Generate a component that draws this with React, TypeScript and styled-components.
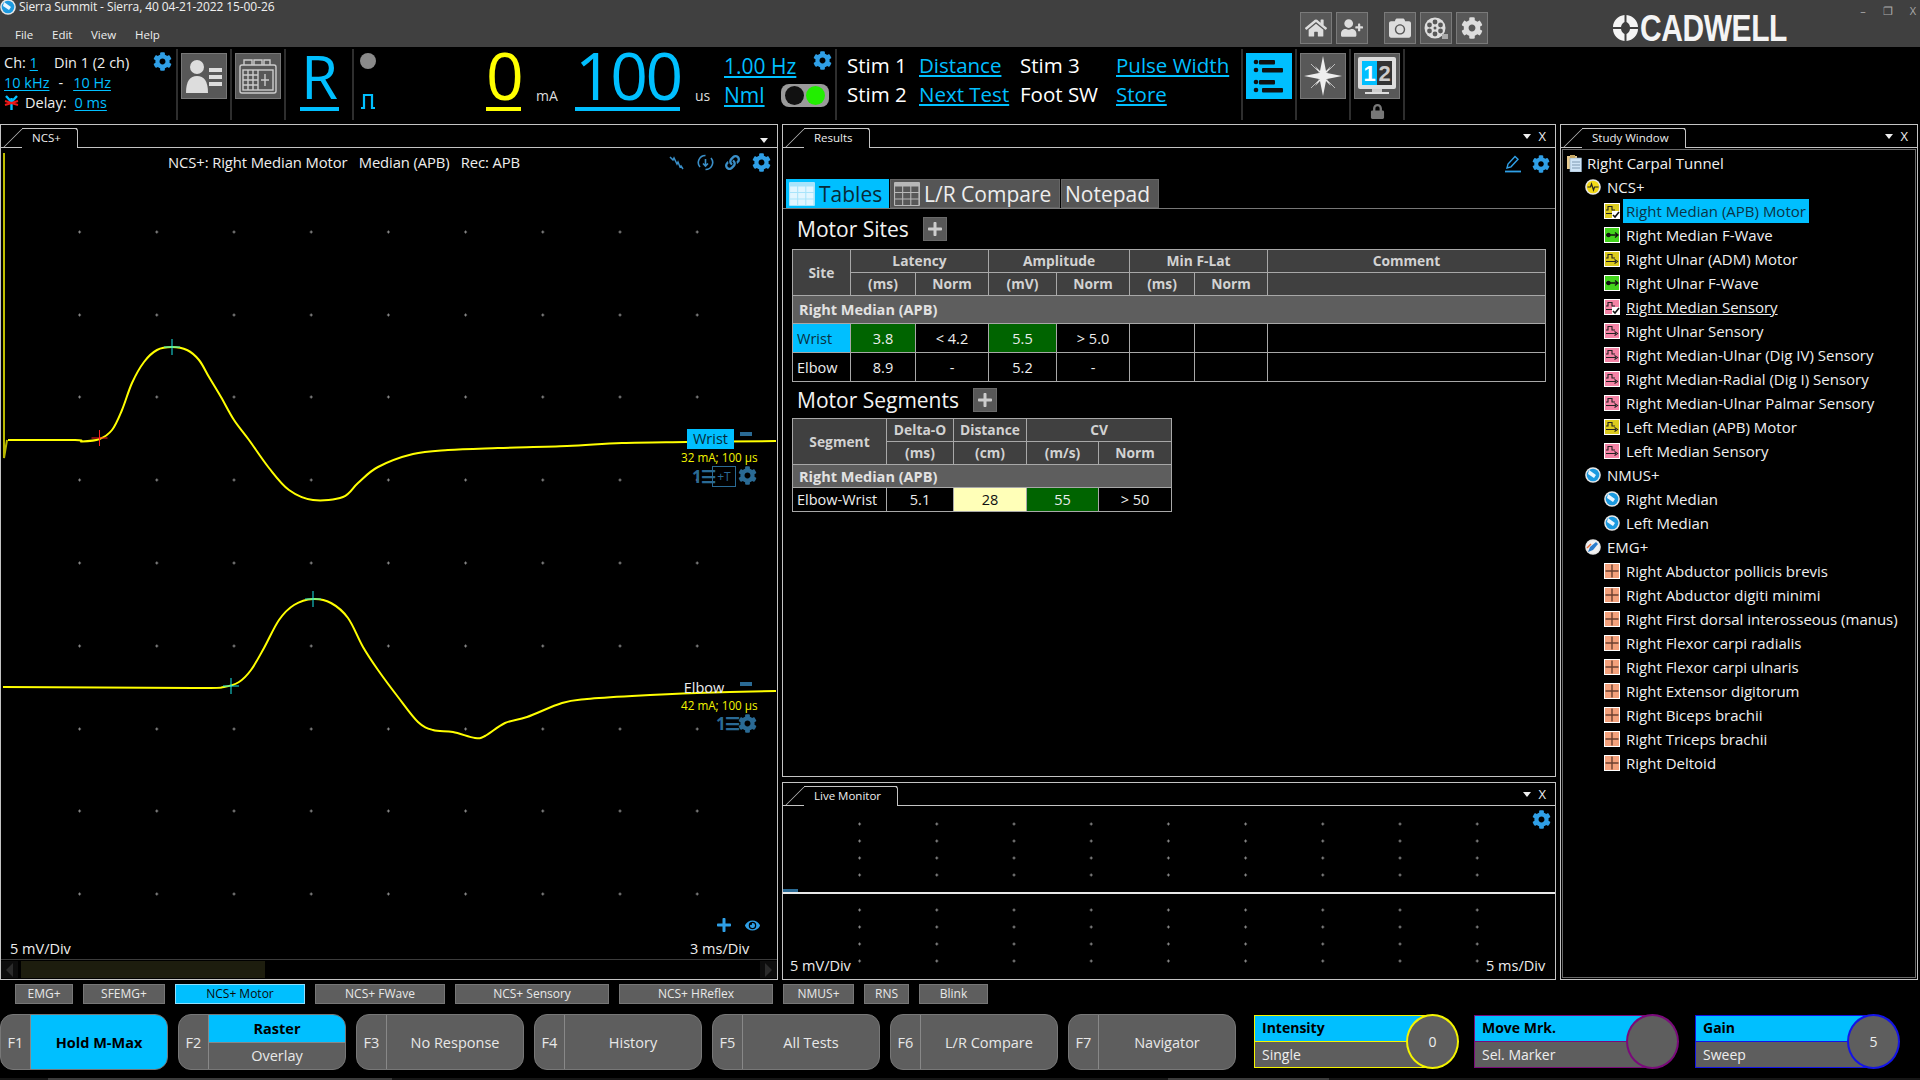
import React from "react";
import styled, { createGlobalStyle } from "styled-components";
import { FaCog, FaHome, FaUserPlus, FaCamera, FaLock, FaLink, FaPlus, FaEye } from "react-icons/fa";

const CYAN = "#00bfff";
const GEAR = "#2f9fe6";
const DIM = "#2a6a94";
const F = `"Open Sans", "Noto Sans", sans-serif`;

const Global = createGlobalStyle`
  html, body { margin: 0; padding: 0; background: #000; width: 1920px; height: 1080px; overflow: hidden; }
  body { font-family: ${F}; color: #fff; }
  * { box-sizing: border-box; }
`;

const Page = styled.div`width:1920px;height:1080px;display:flex;flex-direction:column;background:#000;`;

/* ---------- header ---------- */
const Header = styled.header`height:47px;background:#404040;display:flex;flex:none;`;
const TitleCol = styled.div`width:1300px;display:flex;flex-direction:column;`;
const TitleRow = styled.div`height:13px;display:flex;align-items:center;gap:3px;font-size:12px;letter-spacing:-.1px;color:#f0f0f0;`;
const MenuRow = styled.nav`display:flex;margin-top:14px;padding-left:15px;font-size:11.5px;color:#eee;`;
const MenuItem = styled.span<{ $w: number }>`width:${p => p.$w}px;`;
const HeadIcons = styled.div`display:flex;padding-top:12px;width:312px;`;
const HeadBtn = styled.div<{ $gap?: number }>`width:32px;height:32px;margin-right:${p => p.$gap ?? 4}px;background:#585858;border:1px solid #7a7a7a;display:flex;align-items:center;justify-content:center;color:#ddd;font-size:22px;`;
const Logo = styled.div`width:178px;height:47px;padding-top:14px;display:flex;align-items:flex-start;gap:1px;flex:none;`;
const LogoText = styled.span`font-family:"Liberation Sans",sans-serif;font-weight:700;font-size:37px;line-height:30px;color:#f4f4f4;transform:scaleX(.81);transform-origin:left top;letter-spacing:-.5px;white-space:nowrap;flex:none;`;
const WinCtl = styled.div`flex:1;display:flex;justify-content:flex-end;gap:17px;padding:3px 4px 0 0;font-size:11px;color:#aaa;`;

/* ---------- toolbar ---------- */
const Toolbar = styled.div`height:77px;display:flex;flex:none;padding-top:2px;`;
const Section = styled.div<{ $w: number }>`width:${p => p.$w}px;height:71px;border-right:2px solid #2e2e2e;flex:none;display:flex;position:relative;`;
const ChannelInfo = styled.div`width:100%;padding:5px 0 0 4px;display:flex;flex-direction:column;gap:3px;font-size:14.5px;line-height:17px;color:#eee;`;
const InfoRow = styled.div`display:flex;align-items:center;white-space:nowrap;`;
const Link = styled.span<{ $ml?: number }>`color:${CYAN};text-decoration:underline;text-underline-offset:2px;margin-left:${p => p.$ml ?? 0}px;`;
const Spaced = styled.span<{ $ml: number }>`margin-left:${p => p.$ml}px;`;
const GearAt = styled.span<{ $x: number; $y: number; $size?: number; $c?: string }>`position:absolute;left:${p => p.$x}px;top:${p => p.$y}px;font-size:${p => p.$size ?? 19}px;color:${p => p.$c ?? GEAR};line-height:0;`;
const SquareBtn = styled.div<{ $active?: boolean }>`width:46px;height:46px;margin:4px 0 0 3px;background:${p => (p.$active ? CYAN : "#585858")};border:1px solid ${p => (p.$active ? CYAN : "#777")};display:flex;align-items:center;justify-content:center;flex:none;`;
const SideCol = styled.div`display:flex;flex-direction:column;align-items:center;`;
const LockWrap = styled.div`color:#777;font-size:15px;margin:5px 0 0 3px;line-height:0;`;
const SideBig = styled.div`margin:0 0 0 14px;width:39px;display:flex;flex-direction:column;align-items:center;`;
const BigValue = styled.div<{ $c: string; $w: number; $fs: number; $lh: number; $ml?: number; $ls?: number }>`width:${p => p.$w}px;height:62px;margin-left:${p => p.$ml ?? 0}px;text-align:center;color:${p => p.$c};font-size:${p => p.$fs}px;line-height:${p => p.$lh}px;border-bottom:4px solid ${p => p.$c};letter-spacing:${p => p.$ls ?? 0}px;flex:none;white-space:nowrap;`;
const Lamp = styled.div`width:16px;height:16px;border-radius:50%;background:#8a8a8a;margin:4px 0 24px 6px;flex:none;`;
const PulseWrap = styled.span`margin-left:6px;line-height:0;`;
const LedCol = styled.div`width:22px;display:flex;flex-direction:column;flex:none;`;
const Unit = styled.span<{ $ml: number; $w: number }>`width:${p => p.$w}px;margin-left:${p => p.$ml}px;align-self:flex-start;margin-top:38px;font-size:14px;line-height:18px;color:#ddd;flex:none;`;
const RateCol = styled.div`margin-left:12px;display:flex;flex-direction:column;gap:3px;font-size:21px;line-height:26px;padding-top:4px;flex:none;`;
const ToggleBox = styled.div`width:48px;height:23px;background:#9a9a9a;border-radius:8px;display:flex;align-items:center;justify-content:space-around;padding:0 3px;position:absolute;left:427px;top:35px;`;
const ToggleDot = styled.span<{ $c: string }>`width:19px;height:19px;border-radius:50%;background:${p => p.$c};`;
const StimGrid = styled.div`display:grid;grid-template-columns:72px 101px 96px auto;grid-auto-rows:29px;padding:2px 0 0 10px;font-size:20.5px;line-height:29px;white-space:nowrap;color:#fff;align-content:start;width:100%;`;

/* ---------- panels ---------- */
const Main = styled.main`height:856px;display:grid;grid-template-columns:778px 774px 358px;column-gap:4px;flex:none;`;
const Panel = styled.section<{ $h?: number }>`border:1px solid #c4c4c4;display:flex;flex-direction:column;min-height:0;${p => (p.$h ? `height:${p.$h}px;flex:none;` : "flex:1;")}position:relative;`;
const MidCol = styled.div`display:flex;flex-direction:column;gap:5px;min-height:0;`;
const Strip = styled.div`height:23px;border-bottom:1px solid #c4c4c4;display:flex;align-items:flex-end;justify-content:space-between;padding-left:21px;flex:none;`;
const Tab = styled.div`height:20px;border:1px solid #c4c4c4;border-bottom:none;border-left:none;border-radius:0 3px 0 0;padding:0 16px 0 10px;font-size:11.5px;line-height:17px;color:#eee;position:relative;white-space:nowrap;background:#000;margin-bottom:-1px;
  &::before{content:"";position:absolute;left:-10px;top:0;bottom:0;width:20px;border-left:1px solid #c4c4c4;transform:skewX(-45deg);}
  &::after{content:"";position:absolute;left:0;right:0;top:-1px;border-top:1px solid #c4c4c4;}
`;
const StripCtl = styled.div`display:flex;align-items:center;gap:7px;padding:0 9px 4px 0;font-size:13px;line-height:14px;color:#eee;`;
const Tri = styled.span`width:0;height:0;border-left:4px solid transparent;border-right:4px solid transparent;border-top:5px solid #eee;`;
const Canvas = styled.div`flex:1;position:relative;min-height:0;`;
const CanvasSvg = styled.svg`position:absolute;left:0;top:0;display:block;`;
const CanvasTitle = styled.div`position:absolute;left:167px;top:5px;font-size:14.8px;line-height:18px;color:#eee;white-space:pre;letter-spacing:-.1px;`;
const Float = styled.div<{ $x: number; $y: number; $c?: string; $fs?: number }>`position:absolute;left:${p => p.$x}px;top:${p => p.$y}px;color:${p => p.$c ?? "#eee"};font-size:${p => p.$fs ?? 14.5}px;line-height:18px;white-space:nowrap;display:flex;align-items:center;`;
const TraceLabel = styled.span<{ $on?: boolean }>`width:${p => (p.$on ? 47 : 42)}px;height:20px;background:${p => (p.$on ? CYAN : "transparent")};color:${p => (p.$on ? "#062b3a" : "#eee")};font-size:14.5px;line-height:20px;text-align:center;`;
const Minus = styled.span`width:12px;height:4px;background:${DIM};`;
const PlusT = styled.span`width:24px;height:21px;border:1px solid ${DIM};color:${DIM};font-size:12px;line-height:19px;text-align:center;`;
const NumList = styled.span`color:${DIM};font-size:17px;font-weight:700;line-height:20px;letter-spacing:-1px;width:20px;`;
const ScrollBar = styled.div`height:20px;flex:none;border-top:1px solid #3c3c3c;display:flex;align-items:stretch;padding:1px 0;background:#000;`;
const ScrollArrow = styled.div<{ $dir: "l" | "r" }>`width:17px;display:flex;align-items:center;justify-content:center;background:#0d0d0d;
  &::before{content:"";border-top:7px solid transparent;border-bottom:7px solid transparent;${p => (p.$dir === "l" ? "border-right:7px solid #2b2b2b;" : "border-left:7px solid #2b2b2b;")}}`;
const ScrollTrack = styled.div`flex:1;padding-left:3px;`;
const ScrollThumb = styled.div`width:244px;height:100%;background:#1d1d0e;`;

/* ---------- results ---------- */
const ToolLine = styled.div`height:30px;display:flex;justify-content:flex-end;align-items:center;gap:10px;padding:2px 5px 0 0;color:${GEAR};font-size:18px;flex:none;`;
const TabBar = styled.div`height:30px;display:flex;border-bottom:1px solid #777;padding-left:3px;flex:none;margin-top:1px;`;
const SubTab = styled.div<{ $on?: boolean; $w: number }>`width:${p => p.$w}px;height:29px;background:${p => (p.$on ? CYAN : "#555")};color:${p => (p.$on ? "#082a38" : "#eee")};font-size:21px;line-height:28px;display:flex;align-items:center;gap:4px;padding-left:3px;margin-right:1px;border:${p => (p.$on ? "none" : "1px solid #666")};white-space:nowrap;`;
const GridIcon = styled.svg`flex:none;`;
const Heading = styled.div<{ $h: number }>`height:${p => p.$h}px;display:flex;align-items:center;gap:14px;padding-left:14px;font-size:21px;color:#f2f2f2;flex:none;`;
const AddBtn = styled.div`width:24px;height:24px;background:#585858;border:1px solid #6a6a6a;display:flex;align-items:center;justify-content:center;color:#ccc;font-size:16px;`;
const TableWrap = styled.div`padding-left:9px;flex:none;`;
const Table = styled.table<{ $w: number }>`width:${p => p.$w}px;border-collapse:collapse;table-layout:fixed;font-size:14.5px;`;
const Th = styled.th<{ $h: number }>`height:${p => p.$h}px;background:#404040;border:1px solid #a8a8a8;color:#d2d2d2;font-weight:700;padding:0;font-size:13.8px;line-height:16px;`;
const Sec = styled.td<{ $h: number }>`height:${p => p.$h}px;background:#5e5e5e;border:1px solid #a8a8a8;color:#e2e2e2;font-weight:700;padding:0 0 0 6px;`;
const Td = styled.td<{ $h: number; $bg?: string; $c?: string; $left?: boolean }>`height:${p => p.$h}px;background:${p => p.$bg ?? "#000"};color:${p => p.$c ?? "#eee"};border:1px solid #a8a8a8;padding:${p => (p.$left ? "0 0 0 4px" : "0")};text-align:${p => (p.$left ? "left" : "center")};`;

/* ---------- study ---------- */
const TreeBox = styled.div`flex:1;margin:1px;border:1px solid #6a6a6a;padding-top:1px;min-height:0;`;
const TreeRow = styled.div<{ $lvl: number }>`height:24px;display:flex;align-items:center;padding-left:${p => [4, 22, 41][p.$lvl]}px;gap:${p => (p.$lvl === 0 ? 5 : 6)}px;font-size:15px;color:#f0f0f0;white-space:nowrap;`;
const TreeText = styled.span<{ $sel?: boolean; $u?: boolean }>`height:24px;line-height:24px;padding:0 3px 0 ${p => (p.$sel ? 3 : 0)}px;margin-left:${p => (p.$sel ? -3 : 0)}px;background:${p => (p.$sel ? CYAN : "transparent")};color:${p => (p.$sel ? "#0b3346" : "#f0f0f0")};text-decoration:${p => (p.$u ? "underline" : "none")};`;

/* ---------- bottom ---------- */
const ChipRow = styled.div`height:34px;flex:none;display:flex;padding:4px 0 0 15px;gap:10px;`;
const Chip = styled.div<{ $w: number; $on?: boolean }>`width:${p => p.$w}px;height:20px;background:${p => (p.$on ? CYAN : "#5e5e5e")};color:${p => (p.$on ? "#0a0a0a" : "#e8e8e8")};border:1px solid ${p => (p.$on ? "#8fdfff" : "#777")};font-size:12px;line-height:18px;text-align:center;white-space:nowrap;`;
const KeyRow = styled.div`height:56px;flex:none;display:flex;gap:10px;`;
const FBtn = styled.div`width:168px;height:56px;border-radius:13px;overflow:hidden;background:#5e5e5e;border:1px solid #777;display:flex;flex:none;`;
const FLabel = styled.div`width:30px;border-right:1px solid #888;display:flex;align-items:center;justify-content:center;font-size:14.5px;color:#e8e8e8;flex:none;`;
const FStack = styled.div`flex:1;display:flex;flex-direction:column;`;
const FPart = styled.div<{ $on?: boolean }>`flex:1;display:flex;align-items:center;justify-content:center;font-size:14.5px;background:${p => (p.$on ? CYAN : "transparent")};color:${p => (p.$on ? "#000" : "#e8e8e8")};font-weight:${p => (p.$on ? 700 : 400)};& + &{border-top:1px solid #888;}`;
const Knob = styled.div<{ $ml: number }>`width:205px;height:53px;margin:1px 0 0 ${p => p.$ml}px;position:relative;display:flex;flex:none;`;
const KnobBody = styled.div<{ $c: string }>`flex:1;margin-right:26px;border:1px solid ${p => p.$c};border-right:none;display:flex;flex-direction:column;background:#5e5e5e;`;
const KnobTop = styled.div<{ $c: string }>`height:26px;background:${CYAN};border-bottom:1px solid ${p => p.$c};padding:0 7px;font-size:14px;font-weight:700;line-height:24px;color:#000;flex:none;`;
const KnobBottom = styled.div`flex:1;padding:0 7px;font-size:14px;line-height:25px;color:#eee;`;
const KnobDial = styled.div<{ $c: string }>`position:absolute;right:0;top:-1px;width:53px;height:55px;border-radius:50%;border:2px solid ${p => p.$c};background:#5e5e5e;display:flex;align-items:center;justify-content:center;font-size:14px;color:#eee;`;
const BottomStrip = styled.div`flex:1;margin-top:8px;display:flex;background:#161616;`;
const StripSeg = styled.div<{ $ml: number; $w: number }>`margin-left:${p => p.$ml}px;width:${p => p.$w}px;background:#3c3c3c;`;

/* ---------- drawings ---------- */
const spline = (pts: number[][]) => {
  let d = `M${pts[0][0]} ${pts[0][1]}`;
  for (let i = 0; i < pts.length - 1; i++) {
    const a = pts[Math.max(i - 1, 0)], b = pts[i], c = pts[i + 1], e = pts[Math.min(i + 2, pts.length - 1)];
    d += ` C${b[0] + (c[0] - a[0]) / 6} ${b[1] + (c[1] - a[1]) / 6} ${c[0] - (e[0] - b[0]) / 6} ${c[1] - (e[1] - b[1]) / 6} ${c[0]} ${c[1]}`;
  }
  return d;
};
const W1 = [[8,440],[75,440],[82,441.5],[99.5,439],[112,430],[122,410],[132,383],[144,362],[157,350],[172,347],[187,350],[199,360],[209,377],[221,397],[234,420],[249,440],[269,468],[289,490],[313,500],[343,497],[358,483],[378,467],[413,454],[448,450],[498,448],[567,446],[622,443],[687,442],[776,441]];
const W2 = [[3,687],[194,688],[224,687],[239,682],[251,670],[264,648],[279,620],[294,605],[313,599],[331,603],[348,618],[363,647],[378,670],[398,697],[418,722],[433,730],[453,732],[475,738],[485,736],[505,723],[527,717],[562,703],[587,699],[632,696],[697,693],[776,691]];
const DX = [79.6, 156.8, 234, 311.2, 388.4, 465.6, 542.8, 620, 697.2];
const Dots = ({ xs, ys }: { xs: number[]; ys: number[] }) => (
  <g stroke="#8c8c8c" strokeWidth="1">
    {xs.map(x => ys.map(y => <path key={`${x}-${y}`} d={`M${x - 1.5} ${y}h3M${x} ${y - 1.5}v3`} />))}
  </g>
);
const Cross = ({ x, y, c, v = 8, h = 8 }: { x: number; y: number; c: string; v?: number; h?: number }) => (
  <path d={`M${x} ${y - v}v${v * 2}M${x - h} ${y}h${h * 2}`} stroke={c} strokeWidth="1" fill="none" />
);

const UserCard = () => (
  <svg width="38" height="38" viewBox="0 0 38 38" fill="#ddd">
    <circle cx="12" cy="10" r="7" /><path d="M1 36c0-12 4-17 11-17s11 5 11 17z" />
    <rect x="24" y="11" width="13" height="4" /><rect x="24" y="18" width="13" height="4" /><rect x="24" y="25" width="13" height="4" />
  </svg>
);
const Planner = () => (
  <svg width="40" height="40" viewBox="0 0 40 40" fill="none" stroke="#ccc" strokeWidth="1.4">
    <path d="M6 9V4h8v5M16 9V4h8v5M26 9V4h6v5" /><rect x="2" y="9" width="36" height="28" rx="2" />
    <rect x="5" y="14" width="30" height="20" /><path d="M5 19h15M5 24h15M5 29h15M10 14v20M15 14v20M20 14v20M27 18v12M23 24h8" />
  </svg>
);
const ListIcon = () => (
  <svg width="36" height="40" viewBox="0 0 36 40" fill="#111">
    {[4, 12, 24, 32].map((y, i) => (
      <g key={y}><circle cx="5" cy={y + 2} r="2.3" /><rect x={i % 2 ? 11 : 8} y={y} width={i % 2 ? 21 : 16} height="4.5" rx="1" /></g>
    ))}
  </svg>
);
const Polaris = () => (
  <svg width="42" height="42" viewBox="0 0 42 42">
    <path d="M21 1l3 15 5-5-4 7 15 3-15 3 4 7-5-5-3 15-3-15-5 5 4-7-15-3 15-3-4-7 5 5z" fill="#eee" />
    <path d="M9 9l9 9M33 9l-9 9M9 33l9-9M33 33l-9-9" stroke="#bbb" strokeWidth="1" />
  </svg>
);
const Monitor12 = () => (
  <svg width="40" height="42" viewBox="0 0 40 42">
    <rect x="1" y="2" width="38" height="32" rx="2" fill="#ddd" />
    <rect x="5" y="6" width="15" height="24" fill={CYAN} /><rect x="20" y="6" width="15" height="24" fill="#333" />
    <text x="12.5" y="26" textAnchor="middle" fontSize="22" fontWeight="700" fontFamily="Liberation Sans, sans-serif" fill="#fff">1</text>
    <text x="27.5" y="26" textAnchor="middle" fontSize="22" fontWeight="700" fontFamily="Liberation Sans, sans-serif" fill="#ccc">2</text>
    <rect x="15" y="34" width="10" height="3" fill="#ccc" /><rect x="8" y="37" width="24" height="2" fill="#ddd" />
  </svg>
);
const Reel = () => (
  <svg width="26" height="26" viewBox="0 0 26 26">
    <circle cx="12" cy="13" r="10.5" fill="#ddd" />
    {[[12, 7], [12, 19], [6.5, 10], [17.5, 10], [6.5, 16], [17.5, 16]].map(([x, y]) => <circle key={`${x}${y}`} cx={x} cy={y} r="2.4" fill="#585858" />)}
    <circle cx="12" cy="13" r="1.5" fill="#585858" /><rect x="19" y="19" width="6" height="5" fill="#aaa" />
  </svg>
);
const Pulse = () => (
  <svg width="16" height="16" viewBox="0 0 16 16" fill="none" stroke={CYAN} strokeWidth="2.2"><path d="M1 15h3V2h8v13h3" /></svg>
);
const Antenna = () => (
  <svg width="15" height="16" viewBox="0 0 15 16">
    <path d="M7.5 3v12" stroke={CYAN} strokeWidth="2.4" /><path d="M2 1l5.5 6L13 1" stroke={CYAN} strokeWidth="2.4" fill="none" /><path d="M1 6l13 4M14 6L1 10" stroke="#f01818" strokeWidth="2" />
  </svg>
);
const LogoMark = () => (
  <svg width="27" height="28" viewBox="0 0 27 28" fill="#f4f4f4" style={{ flex: "none" }}>
    <path d="M12.5 1C6 1.6 1 7 1 13h8c.5-3 2-4 3.5-5z" /><path d="M14.5 1c6.5.6 11.5 6 11.5 12h-8c-.5-3-2-4-3.5-5z" />
    <path d="M12.5 27C6 26.400 1 21 1 15h8c.5 3 2 4 3.500 5z" /><path d="M14.5 27c6.500-.6 11.500-6 11.500-12h-8c-.5 3-2 4-3.500 5z" />
  </svg>
);
const WaveScribble = () => (
  <svg width="16" height="16" viewBox="0 0 16 16" fill="none" stroke="#3a8fc8" strokeWidth="1.5"><path d="M1 2l3 3 1-2 3 6 1-2 2 5 1-1 2 3" /></svg>
);
const Cycle = () => (
  <svg width="17" height="17" viewBox="0 0 17 17" fill="none" stroke="#3a8fc8" strokeWidth="1.6"><path d="M3 13A7 7 0 0 1 8.500 1.500M14 4a7 7 0 0 1-5.500 11.500M8.500 5v7M6 9.500l2.500 2.500 2.500-2.500" /></svg>
);
const PenLine = () => (
  <svg width="18" height="18" viewBox="0 0 18 18" fill="none" stroke={GEAR} strokeWidth="1.4" style={{ display: "block" }}>
    <path d="M3 13l1-4 7-7.500 3 2.800-7 7.500z" /><path d="M1 16.500h16" strokeWidth="1.800" />
  </svg>
);
const TableGlyph = ({ on }: { on?: boolean }) => (
  <GridIcon width="26" height="24" viewBox="0 0 24 24" preserveAspectRatio="none">
    <rect width="24" height="24" rx="1" fill={on ? "#a8e4fb" : "#b8b8b8"} />
    {[1, 8.5, 16].map(x => [4.5, 11, 17.5].map(y => <rect key={`${x}${y}`} x={x} y={y} width="6.5" height="5.5" fill={on ? "#e2f6ff" : "#585858"} />))}
  </GridIcon>
);

type Kind = "motor" | "fwave" | "sens" | "emg";
const KIND: Record<Kind, string> = { motor: "#dccb1e", fwave: "#43d41c", sens: "#f483a5", emg: "#f4a17c" };
const IconSvg = styled.svg`flex:none;`;
const TestIcon = ({ kind, check }: { kind: Kind; check?: boolean }) => (
  <IconSvg width="16" height="16" viewBox="0 0 16 16">
    <rect width="16" height="16" fill="#fff" /><rect x="1" y="1" width="14" height="14" fill={KIND[kind]} />
    {kind === "fwave" && <path d="M2 8h11M11 5.5L14 8l-3 2.5" stroke="#111" strokeWidth="1.3" fill="none" />}
    {kind === "fwave" && <circle cx="4.5" cy="8" r="2.2" fill="#111" />}
    {(kind === "motor" || kind === "sens") && <path d="M2 7h2V3.500h4V7h3M2 10.500h10M10.500 8.500l3 2-3 2" stroke="#222" strokeWidth="1.100" fill="none" />}
    {kind === "emg" && <path d="M8 1.500v13M1.500 8h13" stroke="#6a4030" strokeWidth="1.400" />}
    {check && <rect x="8" y="8" width="8" height="8" fill="#fff" />}
    {check && <path d="M9 12l2 2 4-5" stroke="#111" strokeWidth="1.600" fill="none" />}
  </IconSvg>
);
const Orb = ({ kind }: { kind: "ncs" | "nmus" | "emg" }) => (
  <IconSvg width="16" height="16" viewBox="0 0 16 16">
    <circle cx="8" cy="8" r="7.800" fill="#e8e8e8" />
    <circle cx="8" cy="8" r="6.300" fill={kind === "ncs" ? "#f2d816" : kind === "nmus" ? "#1c9ae0" : "#f2f2f2"} />
    {kind === "ncs" && <path d="M2.500 8h3l1-3 2 6 1-3h4" stroke="#222" strokeWidth="1.200" fill="none" />}
    {kind === "nmus" && <path d="M4 3l7 5-2 3-6-4z" fill="#eaf6ff" />}
    {kind === "emg" && <path d="M3 13l2-5 6-5 2 2-5 6z" fill="#2a7ccc" />}
    {kind === "emg" && <path d="M2 9c2-2 3-3 4-4" stroke="#e8703a" strokeWidth="1.500" />}
  </IconSvg>
);
const Clip = () => (
  <IconSvg width="15" height="17" viewBox="0 0 15 17">
    <rect x="0" y="1" width="10" height="13" fill="#e6c98e" /><rect x="3" y="3" width="11.500" height="14" fill="#cfe4f6" stroke="#8aa6bd" strokeWidth=".6" />
    <path d="M5 7h8M5 10h8M5 13h8" stroke="#7f99b1" strokeWidth="1" />
    <rect x="3" y="0" width="5" height="3" fill="#c7a866" />
  </IconSvg>
);

const tests: { t: string; k: Kind; check?: boolean; sel?: boolean; u?: boolean }[] = [
  { t: "Right Median (APB) Motor", k: "motor", check: true, sel: true },
  { t: "Right Median F-Wave", k: "fwave" },
  { t: "Right Ulnar (ADM) Motor", k: "motor" },
  { t: "Right Ulnar F-Wave", k: "fwave" },
  { t: "Right Median Sensory", k: "sens", check: true, u: true },
  { t: "Right Ulnar Sensory", k: "sens" },
  { t: "Right Median-Ulnar (Dig IV) Sensory", k: "sens" },
  { t: "Right Median-Radial (Dig I) Sensory", k: "sens" },
  { t: "Right Median-Ulnar Palmar Sensory", k: "sens" },
  { t: "Left Median (APB) Motor", k: "motor" },
  { t: "Left Median Sensory", k: "sens" },
];
const emg = ["Right Abductor pollicis brevis", "Right Abductor digiti minimi", "Right First dorsal interosseous (manus)", "Right Flexor carpi radialis", "Right Flexor carpi ulnaris", "Right Extensor digitorum", "Right Biceps brachii", "Right Triceps brachii", "Right Deltoid"];
const chips: [string, number, boolean?][] = [["EMG+", 58], ["SFEMG+", 82], ["NCS+ Motor", 130, true], ["NCS+ FWave", 130], ["NCS+ Sensory", 154], ["NCS+ HReflex", 154], ["NMUS+", 71], ["RNS", 45], ["Blink", 69]];

const StripControls = ({ close = true }: { close?: boolean }) => (
  <StripCtl><Tri />{close && <span>X</span>}</StripCtl>
);

export default function App() {
  return (
    <Page>
      <Global />
      <Header>
        <TitleCol>
          <TitleRow>
            <Orb kind="nmus" />
            <span>Sierra Summit - Sierra, 40 04-21-2022 15-00-26</span>
          </TitleRow>
          <MenuRow>
            <MenuItem $w={37}>File</MenuItem><MenuItem $w={39}>Edit</MenuItem><MenuItem $w={44}>View</MenuItem><MenuItem $w={40}>Help</MenuItem>
          </MenuRow>
        </TitleCol>
        <HeadIcons>
          <HeadBtn><FaHome /></HeadBtn>
          <HeadBtn $gap={16}><FaUserPlus /></HeadBtn>
          <HeadBtn><FaCamera /></HeadBtn>
          <HeadBtn><Reel /></HeadBtn>
          <HeadBtn><FaCog /></HeadBtn>
        </HeadIcons>
        <Logo><LogoMark /><LogoText>CADWELL</LogoText></Logo>
        <WinCtl><span>–</span><span>❐</span><span>X</span></WinCtl>
      </Header>

      <Toolbar>
        <Section $w={178}>
          <ChannelInfo>
            <InfoRow>Ch:&nbsp;<Link>1</Link><Spaced $ml={16}>Din 1 (2 ch)</Spaced></InfoRow>
            <InfoRow><Link>10 kHz</Link><Spaced $ml={9}>-</Spaced><Link $ml={10}>10 Hz</Link></InfoRow>
            <InfoRow><Antenna /><Spaced $ml={6}>Delay:</Spaced><Link $ml={8}>0 ms</Link></InfoRow>
          </ChannelInfo>
          <GearAt $x={153} $y={3}><FaCog /></GearAt>
        </Section>
        <Section $w={54}><SquareBtn><UserCard /></SquareBtn></Section>
        <Section $w={54}><SquareBtn><Planner /></SquareBtn></Section>
        <Section $w={68}>
          <SideBig><BigValue $c={CYAN} $w={39} $fs={60} $lh={55}>R</BigValue></SideBig>
        </Section>
        <Section $w={483}>
          <LedCol><Lamp /><PulseWrap><Pulse /></PulseWrap></LedCol>
          <BigValue $c="#ffff00" $w={35} $fs={66} $lh={51} $ml={110}>0</BigValue>
          <Unit $ml={15} $w={26}>mA</Unit>
          <BigValue $c={CYAN} $w={105} $fs={66} $lh={51} $ml={13} $ls={-2.5}>100</BigValue>
          <Unit $ml={15} $w={17}>us</Unit>
          <RateCol><Link>1.00 Hz</Link><span><Link>Nml</Link></span></RateCol>
          <GearAt $x={459} $y={2}><FaCog /></GearAt>
          <ToggleBox><ToggleDot $c="#111" /><ToggleDot $c="#22ee00" /></ToggleBox>
        </Section>
        <Section $w={406}>
          <StimGrid>
            <span>Stim 1</span><Link>Distance</Link><span>Stim 3</span><Link>Pulse Width</Link>
            <span>Stim 2</span><Link>Next Test</Link><span>Foot SW</span><Link>Store</Link>
          </StimGrid>
        </Section>
        <Section $w={54}><SquareBtn $active><ListIcon /></SquareBtn></Section>
        <Section $w={54}><SquareBtn><Polaris /></SquareBtn></Section>
        <Section $w={54}>
          <SideCol><SquareBtn><Monitor12 /></SquareBtn><LockWrap><FaLock /></LockWrap></SideCol>
        </Section>
      </Toolbar>

      <Main>
        <Panel>
          <Strip><Tab>NCS+</Tab><StripControls close={false} /></Strip>
          <Canvas>
            <CanvasSvg width="776" height="811" viewBox="1 148 776 811">
              <Dots xs={DX} ys={[232, 315, 397, 480, 563, 646, 729, 811, 894]} />
              <path d="M4 153V400" stroke="#ffff00" strokeWidth="1.5" fill="none" />
              <path d="M4 400V458L7 440" stroke="#b8b800" strokeWidth="2" fill="none" />
              <path d={spline(W1)} stroke="#ffff00" strokeWidth="2" fill="none" />
              <path d={spline(W2)} stroke="#ffff00" strokeWidth="2" fill="none" />
              <Cross x={99.5} y={438} c="#ff2020" />
              <Cross x={172} y={347} c="#19e6e6" />
              <Cross x={231} y={686} c="#19e6e6" />
              <Cross x={313} y={599} c="#19e6e6" />
            </CanvasSvg>
            <CanvasTitle>NCS+: Right Median Motor   Median (APB)   Rec: APB</CanvasTitle>
            <GearAt $x={668} $y={7}><WaveScribble /></GearAt>
            <GearAt $x={696} $y={6}><Cycle /></GearAt>
            <GearAt $x={724} $y={7} $size={15} $c="#3a8fc8"><FaLink /></GearAt>
            <GearAt $x={751} $y={5}><FaCog /></GearAt>
            <Float $x={686} $y={281}><TraceLabel $on>Wrist</TraceLabel></Float>
            <Float $x={739} $y={284}><Minus /></Float>
            <Float $x={680} $y={300} $c="#f4f400" $fs={11.7}>32 mA; 100 µs</Float>
            <Float $x={691} $y={318}><NumList>1☰</NumList><PlusT>+T</PlusT></Float>
            <GearAt $x={737} $y={318} $c={DIM}><FaCog /></GearAt>
            <Float $x={682} $y={530}><TraceLabel>Elbow</TraceLabel></Float>
            <Float $x={739} $y={534}><Minus /></Float>
            <Float $x={680} $y={548} $c="#f4f400" $fs={11.7}>42 mA; 100 µs</Float>
            <Float $x={715} $y={566}><NumList>1☰</NumList></Float>
            <GearAt $x={737} $y={566} $c={DIM}><FaCog /></GearAt>
            <GearAt $x={715} $y={769} $size={16} $c={GEAR}><FaPlus /></GearAt>
            <GearAt $x={744} $y={770} $size={15} $c={GEAR}><FaEye /></GearAt>
            <Float $x={9} $y={792}>5 mV/Div</Float>
            <Float $x={689} $y={792}>3 ms/Div</Float>
          </Canvas>
          <ScrollBar>
            <ScrollArrow $dir="l" /><ScrollTrack><ScrollThumb /></ScrollTrack><ScrollArrow $dir="r" />
          </ScrollBar>
        </Panel>

        <MidCol>
          <Panel $h={653}>
            <Strip><Tab>Results</Tab><StripControls /></Strip>
            <ToolLine><PenLine /><FaCog /></ToolLine>
            <TabBar>
              <SubTab $on $w={103}><TableGlyph on />Tables</SubTab>
              <SubTab $w={170}><TableGlyph />L/R Compare</SubTab>
              <SubTab $w={98}>Notepad</SubTab>
            </TabBar>
            <Heading $h={40}>Motor Sites<AddBtn><FaPlus /></AddBtn></Heading>
            <TableWrap>
              <Table $w={753}>
                <colgroup>
                  {[58, 65, 73, 68, 73, 65, 73, 278].map((w, i) => <col key={i} width={w} />)}
                </colgroup>
                <tbody>
                  <tr><Th $h={23} rowSpan={2}>Site</Th><Th $h={23} colSpan={2}>Latency</Th><Th $h={23} colSpan={2}>Amplitude</Th><Th $h={23} colSpan={2}>Min F-Lat</Th><Th $h={23}>Comment</Th></tr>
                  <tr><Th $h={23}>(ms)</Th><Th $h={23}>Norm</Th><Th $h={23}>(mV)</Th><Th $h={23}>Norm</Th><Th $h={23}>(ms)</Th><Th $h={23}>Norm</Th><Th $h={23} /></tr>
                  <tr><Sec $h={28} colSpan={8}>Right Median (APB)</Sec></tr>
                  <tr><Td $h={29} $bg={CYAN} $c="#083040" $left>Wrist</Td><Td $h={29} $bg="#006400">3.8</Td><Td $h={29}>&lt; 4.2</Td><Td $h={29} $bg="#006400">5.5</Td><Td $h={29}>&gt; 5.0</Td><Td $h={29} /><Td $h={29} /><Td $h={29} /></tr>
                  <tr><Td $h={29} $left>Elbow</Td><Td $h={29}>8.9</Td><Td $h={29}>-</Td><Td $h={29}>5.2</Td><Td $h={29}>-</Td><Td $h={29} /><Td $h={29} /><Td $h={29} /></tr>
                </tbody>
              </Table>
            </TableWrap>
            <Heading $h={36}>Motor Segments<AddBtn><FaPlus /></AddBtn></Heading>
            <TableWrap>
              <Table $w={379}>
                <colgroup>
                  {[94, 67, 73, 72, 73].map((w, i) => <col key={i} width={w} />)}
                </colgroup>
                <tbody>
                  <tr><Th $h={23} rowSpan={2}>Segment</Th><Th $h={23}>Delta-O</Th><Th $h={23}>Distance</Th><Th $h={23} colSpan={2}>CV</Th></tr>
                  <tr><Th $h={23}>(ms)</Th><Th $h={23}>(cm)</Th><Th $h={23}>(m/s)</Th><Th $h={23}>Norm</Th></tr>
                  <tr><Sec $h={23} colSpan={5}>Right Median (APB)</Sec></tr>
                  <tr><Td $h={24} $left>Elbow-Wrist</Td><Td $h={24}>5.1</Td><Td $h={24} $bg="#ffffb8" $c="#111">28</Td><Td $h={24} $bg="#006400">55</Td><Td $h={24}>&gt; 50</Td></tr>
                </tbody>
              </Table>
            </TableWrap>
          </Panel>
          <Panel>
            <Strip><Tab>Live Monitor</Tab><StripControls /></Strip>
            <Canvas>
              <CanvasSvg width="772" height="174" viewBox="783 805 772 174">
                <Dots xs={DX.map(x => x + 780)} ys={[823, 840, 857, 874, 909, 926, 943, 960]} />
                <path d="M783 892H1555" stroke="#e8e8e8" strokeWidth="2" />
                <path d="M783 889.5h15" stroke="#2a6a94" strokeWidth="3" />
              </CanvasSvg>
              <GearAt $x={749} $y={4}><FaCog /></GearAt>
              <Float $x={7} $y={151}>5 mV/Div</Float>
              <Float $x={703} $y={151}>5 ms/Div</Float>
            </Canvas>
          </Panel>
        </MidCol>

        <Panel>
          <Strip><Tab>Study Window</Tab><StripControls /></Strip>
          <TreeBox>
            <TreeRow $lvl={0}><Clip /><TreeText>Right Carpal Tunnel</TreeText></TreeRow>
            <TreeRow $lvl={1}><Orb kind="ncs" /><TreeText>NCS+</TreeText></TreeRow>
            {tests.map(t => (
              <TreeRow $lvl={2} key={t.t}><TestIcon kind={t.k} check={t.check} /><TreeText $sel={t.sel} $u={t.u}>{t.t}</TreeText></TreeRow>
            ))}
            <TreeRow $lvl={1}><Orb kind="nmus" /><TreeText>NMUS+</TreeText></TreeRow>
            <TreeRow $lvl={2}><Orb kind="nmus" /><TreeText>Right Median</TreeText></TreeRow>
            <TreeRow $lvl={2}><Orb kind="nmus" /><TreeText>Left Median</TreeText></TreeRow>
            <TreeRow $lvl={1}><Orb kind="emg" /><TreeText>EMG+</TreeText></TreeRow>
            {emg.map(t => (
              <TreeRow $lvl={2} key={t}><TestIcon kind="emg" /><TreeText>{t}</TreeText></TreeRow>
            ))}
          </TreeBox>
        </Panel>
      </Main>

      <ChipRow>
        {chips.map(([t, w, on]) => <Chip key={t} $w={w} $on={on}>{t}</Chip>)}
      </ChipRow>

      <KeyRow>
        <FBtn><FLabel>F1</FLabel><FStack><FPart $on>Hold M-Max</FPart></FStack></FBtn>
        <FBtn><FLabel>F2</FLabel><FStack><FPart $on>Raster</FPart><FPart>Overlay</FPart></FStack></FBtn>
        <FBtn><FLabel>F3</FLabel><FStack><FPart>No Response</FPart></FStack></FBtn>
        <FBtn><FLabel>F4</FLabel><FStack><FPart>History</FPart></FStack></FBtn>
        <FBtn><FLabel>F5</FLabel><FStack><FPart>All Tests</FPart></FStack></FBtn>
        <FBtn><FLabel>F6</FLabel><FStack><FPart>L/R Compare</FPart></FStack></FBtn>
        <FBtn><FLabel>F7</FLabel><FStack><FPart>Navigator</FPart></FStack></FBtn>
        <Knob $ml={8}><KnobBody $c="#f4f400"><KnobTop $c="#f4f400">Intensity</KnobTop><KnobBottom>Single</KnobBottom></KnobBody><KnobDial $c="#f4f400">0</KnobDial></Knob>
        <Knob $ml={5}><KnobBody $c="#7a0a7a"><KnobTop $c="#7a0a7a">Move Mrk.</KnobTop><KnobBottom>Sel. Marker</KnobBottom></KnobBody><KnobDial $c="#7a0a7a" /></Knob>
        <Knob $ml={6}><KnobBody $c="#1414e6"><KnobTop $c="#1414e6">Gain</KnobTop><KnobBottom>Sweep</KnobBottom></KnobBody><KnobDial $c="#1414e6">5</KnobDial></Knob>
      </KeyRow>
      <BottomStrip><StripSeg $ml={48} $w={344} /><StripSeg $ml={776} $w={161} /></BottomStrip>
    </Page>
  );
}
